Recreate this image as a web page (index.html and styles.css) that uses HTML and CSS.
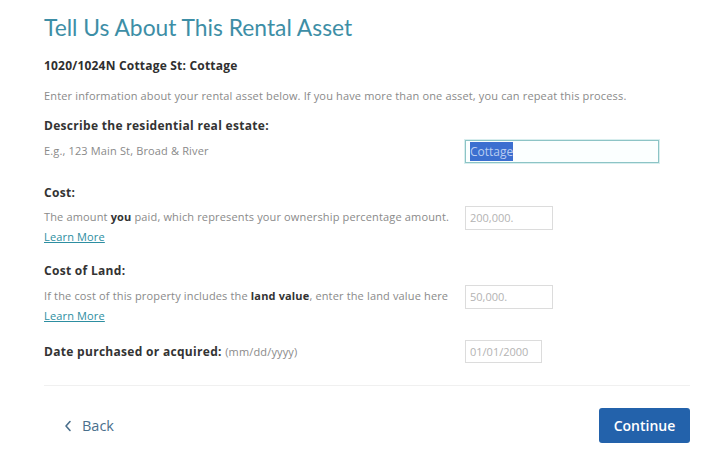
FILE: index.html
```html
<!DOCTYPE html>
<html>
<head>
<meta charset="utf-8">
<link rel="stylesheet" href="styles.css">
</head>
<body>
<div class="page">
  <h1 class="title">Tell Us About This Rental Asset</h1>
  <div class="subtitle">1020/1024N Cottage St: Cottage</div>
  <p class="intro">Enter information about your rental asset below. If you have more than one asset, you can repeat this process.</p>

  <div class="field field-first">
    <div class="label">Describe the residential real estate:</div>
    <div class="row">
      <div class="desc">E.g., 123 Main St, Broad &amp; River</div>
      <div class="input input-wide input-focus"><span class="sel">Cottage</span></div>
    </div>
  </div>

  <div class="field field-cost">
    <div class="label">Cost:</div>
    <div class="row">
      <div class="desc">The amount <b>you</b> paid, which represents your ownership percentage amount.<br><a class="learn" href="#">Learn More</a></div>
      <div class="input input-mid"><span class="ph">200,000.</span></div>
    </div>
  </div>

  <div class="field field-land">
    <div class="label">Cost of Land:</div>
    <div class="row">
      <div class="desc">If the cost of this property includes the <b>land value</b>, enter the land value here<br><a class="learn" href="#">Learn More</a></div>
      <div class="input input-mid"><span class="ph">50,000.</span></div>
    </div>
  </div>

  <div class="field field-date">
    <div class="row row-center">
      <div class="label">Date purchased or acquired: <span class="hint">(mm/dd/yyyy)</span></div>
      <div class="input input-date"><span class="ph">01/01/2000</span></div>
    </div>
  </div>

  <div class="divider"></div>

  <div class="actions">
    <a class="back" href="#"><svg class="chev" width="8" height="12" viewBox="0 0 8 12"><path d="M6 1.5 L2 6 L6 10.5" fill="none" stroke="#4a6f8c" stroke-width="1.6" stroke-linecap="round" stroke-linejoin="round"/></svg><span>Back</span></a>
    <button class="continue">Continue</button>
  </div>
</div>
</body>
</html>
```
FILE: styles.css
```css
html, body {
  margin: 0;
  padding: 0;
  background: #ffffff;
}
body {
  font-family: "Open Sans", Lato, "Liberation Sans", sans-serif;
  color: #333;
}
.page {
  padding: 12px 30px 0 44px;
}
.title {
  margin: 0;
  font-family: Lato, "Open Sans", sans-serif;
  font-size: 22.8px;
  line-height: 30px;
  font-weight: 400;
  color: #3d8ea6;
}
.subtitle {
  margin-top: 17px;
  font-size: 12px;
  letter-spacing: 0.2px;
  line-height: 14px;
  font-weight: 700;
  color: #2f2f2f;
}
.intro {
  margin: 16px 0 0 0;
  font-size: 11px;
  letter-spacing: 0.15px;
  line-height: 14px;
  color: #8a8a8a;
}
.field-first { margin-top: 16px; }
.field-cost { margin-top: 23px; }
.field-land { margin-top: 17px; }
.field-date { margin-top: 14px; }
.label {
  font-size: 12px;
  letter-spacing: 0.3px;
  line-height: 14px;
  font-weight: 700;
  color: #333;
}
.hint {
  font-weight: 400;
  font-size: 11px;
  letter-spacing: 0.15px;
  color: #8a8a8a;
}
.row {
  display: grid;
  grid-template-columns: 421px auto;
  align-items: start;
  margin-top: 8px;
}
.field-cost .row { margin-top: 7px; }
.row-center {
  align-items: center;
  margin-top: 0;
}
.desc {
  font-size: 11px;
  letter-spacing: 0.15px;
  line-height: 20px;
  color: #8a8a8a;
}
.desc b {
  color: #333;
  font-weight: 700;
}
.learn {
  color: #2d8ea1;
  text-decoration: underline;
}
.input {
  box-sizing: border-box;
  height: 24px;
  border: 1px solid #dcdcdc;
  padding: 0 4px;
  font-size: 11px;
  line-height: 22px;
  background: #fff;
}
.field-first .input { margin-top: -1px; }
.input-wide { width: 194px; height: 23px; }
.input-mid { width: 88px; margin-top: -1px; }
.input-date { width: 77px; height: 23px; }
.input-focus {
  border: 1px solid #8cc4c6;
  box-shadow: 0 0 0 1px #d8eeee;
  background: #fbffff;
}
.sel {
  background: #3c6fd0;
  color: #b9cdf0;
  font-size: 12px;
  padding: 1px 0;
}
.ph {
  color: #b3b3b3;
}
.divider {
  margin-top: 22px;
  height: 1px;
  background: #f0f0f0;
}
.actions {
  display: flex;
  justify-content: space-between;
  align-items: center;
  margin-top: 22px;
}
.back {
  display: flex;
  align-items: center;
  gap: 10px;
  margin-left: 20px;
  text-decoration: none;
  color: #4a6f8c;
  font-size: 14.5px;
}
.continue {
  width: 91px;
  height: 35px;
  border: 0;
  border-radius: 3px;
  background: #2362ab;
  color: #fff;
  font-family: "Open Sans", Lato, sans-serif;
  font-size: 14px;
  font-weight: 600;
  padding: 0;
}
```
